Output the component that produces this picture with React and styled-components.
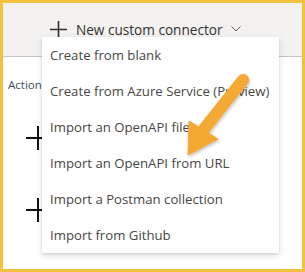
import React from 'react'
import styled, {createGlobalStyle} from 'styled-components'

const Global = createGlobalStyle`
  html, body { margin:0; padding:0; background:#fff; }
  body { font-family:"Segoe UI","Open Sans",sans-serif; }
`;

const items = [
  "Create from blank",
  "Create from Azure Service (Preview)",
  "Import an OpenAPI file",
  "Import an OpenAPI from URL",
  "Import a Postman collection",
  "Import from Github",
];

const PlusIcon = ({size=17, stroke=1.6, color="#323130"}) => (
  <svg width={size} height={size} viewBox="0 0 24 24">
    <path d="M12 0V24M0 12H24" stroke={color} strokeWidth={stroke * 24 / size} fill="none"/>
  </svg>
);

const Chevron = () => (
  <svg width="10" height="6" viewBox="0 0 10 6">
    <path d="M0.5 0.5L5 5L9.5 0.5" stroke="#605e5c" strokeWidth="1" fill="none"/>
  </svg>
);

export default function App() {
  return (
    <>
      <Global/>
      <Frame>
        <CommandBar>
          <NewButton>
            <PlusIcon/>
            <span>New custom connector</span>
            <Chevron/>
          </NewButton>
        </CommandBar>
        <Content>
          <TabLabel>Actions</TabLabel>
          <AddList>
            <AddRow><PlusIcon size={24} stroke={2} color="#111"/></AddRow>
            <AddRow><PlusIcon size={24} stroke={2} color="#111"/></AddRow>
          </AddList>
        </Content>
        <Menu>
          {items.map((item,index)=>(
            <MenuItem key={index}>{item}</MenuItem>
          ))}
        </Menu>
        <Arrow viewBox="0 0 299 266">
          <defs>
            <filter id="sh" x="-20%" y="-20%" width="140%" height="140%">
              <feDropShadow dx="1" dy="1.5" stdDeviation="1.5" floodColor="#000" floodOpacity="0.25"/>
            </filter>
          </defs>
          <g filter="url(#sh)" fill="#F4A934" stroke="#F4A934">
            <line x1="240" y1="77" x2="201" y2="126" strokeWidth="12" strokeLinecap="round"/>
            <polygon points="186,118 215,136 185,152" strokeWidth="1" strokeLinejoin="round"/>
          </g>
        </Arrow>
      </Frame>
    </>
  )
}

const Frame = styled.div`
  position:relative;
  width:305px;
  height:272px;
  box-sizing:border-box;
  border:3px solid #F2C13D;
  overflow:hidden;
  background:#fff;
`;

const CommandBar = styled.div`
  height:54px;
  background:#f3f2f1;
  border-bottom:1px solid #c8c6c4;
  display:flex;
  align-items:center;
  padding-left:47px;
  box-sizing:border-box;
`;

const NewButton = styled.div`
  display:flex;
  align-items:center;
  gap:9px;
  margin-top:-1px;
  color:#323130;
  font-size:13.6px;
  span{ margin-right:-1px; }
`;

const Content = styled.div`
  padding:18px 0 0 5px;
`;

const TabLabel = styled.div`
  font-size:11.5px;
  line-height:20px;
  color:#3c4e63;
  height:20px;
`;

const AddList = styled.div`
  display:flex;
  flex-direction:column;
  margin-top:7px;
`;

const AddRow = styled.div`
  display:flex;
  align-items:center;
  height:72px;
  padding-left:18px;
`;

const Menu = styled.div`
  position:absolute;
  left:39px;
  top:34px;
  width:237px;
  background:#fff;
  box-shadow:0 3px 7px rgba(0,0,0,0.13), 0 1px 2px rgba(0,0,0,0.1);
  display:flex;
  flex-direction:column;
`;

const MenuItem = styled.div`
  height:36px;
  display:flex;
  align-items:center;
  padding-left:8px;
  font-size:13.2px;
  color:#484644;
  white-space:nowrap;
`;

const Arrow = styled.svg`
  position:absolute;
  left:0;
  top:0;
  width:299px;
  height:266px;
  pointer-events:none;
`;
